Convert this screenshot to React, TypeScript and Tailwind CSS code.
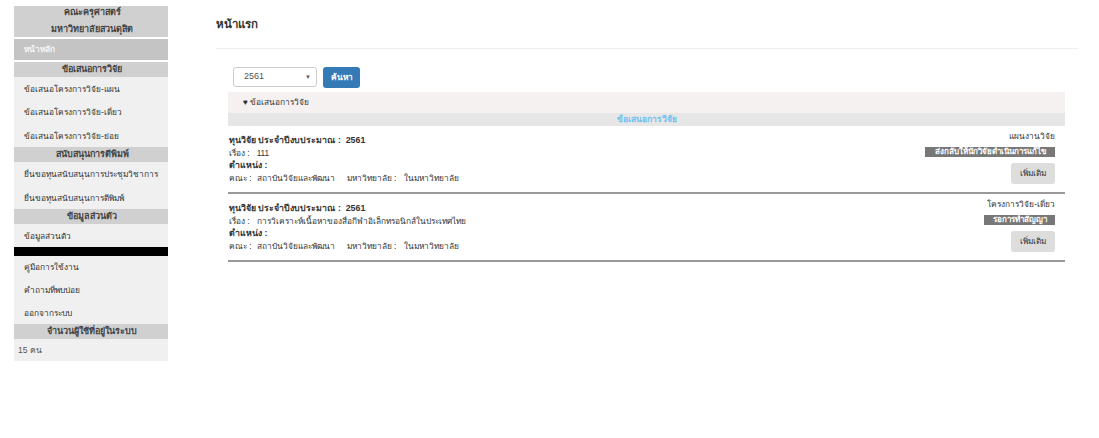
const linkClass = "flex h-[23.4px] items-center whitespace-nowrap pl-[10px] pt-[1px] text-[8.3px] text-[#333]";
const lowerLinkClass = "flex h-[22.7px] items-center whitespace-nowrap pl-[10px] text-[8.3px] text-[#333]";

function SectionHead({ title }: { title: string }) {
	return <div className="flex h-[15px] items-center justify-center pl-[2px] bg-[#d0d0d0] text-[9px] font-bold text-[#444]">{title}</div>;
}

function Project(props: { topic: string; type: string; status: string; statusWidth: string }) {
	return (
		<div className="flex h-[68px] justify-between border-b-2 border-[#999] text-[8.3px] text-[#333]">
			<div className="flex flex-col pl-px pt-[8px] leading-[12.5px]">
				<p className="text-[8.8px] font-bold">ทุนวิจัย ประจำปีงบประมาณ :&nbsp;&nbsp;2561</p>
				<p>
					เรื่อง :<span className="ml-[7px]">{props.topic}</span>
				</p>
				<p className="text-[8.8px] font-bold">ตำแหน่ง :</p>
				<p>
					คณะ :<span className="ml-[5px]">สถาบันวิจัยและพัฒนา</span>
					<span className="ml-[12px]">มหาวิทยาลัย :</span>
					<span className="ml-[8px]">ในมหาวิทยาลัย</span>
				</p>
			</div>
			<div className="flex flex-col items-end pr-[10px] pt-[5px]">
				<p className="leading-[11px]">{props.type}</p>
				<p className={`mt-[5px] h-[10px] bg-[#777] text-center text-[8px] font-bold leading-[10px] text-white ${props.statusWidth}`}>{props.status}</p>
				<button type="button" className="mt-[6px] h-[21px] w-[44px] rounded-[3px] bg-[#ddd] text-[8.3px] text-[#333]">
					เพิ่มเติม
				</button>
			</div>
		</div>
	);
}

export default function App() {
	return (
		<div className="flex h-[438px] w-[1099px] items-start bg-white font-['Liberation_Sans','Noto_Sans',sans-serif]">
			{/* เมนูด้านซ้าย */}
			<aside className="ml-[14px] mt-[6px] w-[154px] bg-[#f0f0f0]">
				<div className="flex h-[31px] flex-col items-center justify-center bg-[#d0d0d0] pb-[2px] pl-[2px] text-[9px] font-bold leading-[17px] text-[#444]">
					<p>คณะครุศาสตร์</p>
					<p>มหาวิทยาลัยสวนดุสิต</p>
				</div>
				<div className="border-y-2 border-white">
					<div className="flex h-[21px] items-center bg-[#c4c4c4] pl-[10px] text-[8.3px] font-bold text-[#f4f4f4]">หน้าหลัก</div>
				</div>
				<SectionHead title="ข้อเสนอการวิจัย" />
				<a className={linkClass}>ข้อเสนอโครงการวิจัย-แผน</a>
				<a className={linkClass}>ข้อเสนอโครงการวิจัย-เดี่ยว</a>
				<a className={linkClass}>ข้อเสนอโครงการวิจัย-ย่อย</a>
				<SectionHead title="สนับสนุนการตีพิมพ์" />
				<a className={linkClass}>ยื่นขอทุนสนับสนุนการประชุมวิชาการ</a>
				<a className={linkClass}>ยื่นขอทุนสนับสนุนการตีพิมพ์</a>
				<SectionHead title="ข้อมูลส่วนตัว" />
				<a className={linkClass}>ข้อมูลส่วนตัว</a>
				<div className="h-[9px] bg-black" />
				<a className={lowerLinkClass}>คู่มือการใช้งาน</a>
				<a className={lowerLinkClass}>คำถามที่พบบ่อย</a>
				<a className={lowerLinkClass}>ออกจากระบบ</a>
				<SectionHead title="จำนวนผู้ใช้ที่อยู่ในระบบ" />
				<div className="flex h-[22px] items-center pl-[4px] text-[8.5px] text-[#555]">15 คน</div>
			</aside>

			{/* เนื้อหา */}
			<main className="ml-[48px] w-[862px]">
				<h1 className="flex h-[48px] items-center pt-[2px] text-[11.5px] font-bold text-[#333]">หน้าแรก</h1>
				<div className="h-px bg-[#eee]" />
				<div className="ml-[12px] w-[837px]">
					<div className="mt-[18px] flex items-start gap-[6px] pl-[5px]">
						<div className="flex h-[20px] w-[84px] items-center justify-between rounded-[3px] border border-[#ccc] px-[10px] text-[9px] text-[#555]">
							<span>2561</span>
							<span className="-mr-[5px] text-[6px]">▼</span>
						</div>
						<button type="button" className="h-[21px] w-[37px] rounded-[3px] bg-[#337ab7] text-[8.3px] font-bold text-white">
							ค้นหา
						</button>
					</div>
					<div className="mt-[4px] flex h-[21px] items-center bg-[#f5f1f1] pl-[15px] text-[8.3px] text-[#333]">♥ ข้อเสนอการวิจัย</div>
					<div className="flex h-[13px] items-center justify-center bg-[#e6e6e6] text-[8.5px] font-bold text-[#6ec1f0]">ข้อเสนอการวิจัย</div>
					<Project topic="111" type="แผนงานวิจัย" status="ส่งกลับให้นักวิจัยดำเนินการแก้ไข" statusWidth="w-[130px]" />
					<Project
						topic="การวิเคราะห์เนื้อหาของสื่อกีฬาอิเล็กทรอนิกส์ในประเทศไทย"
						type="โครงการวิจัย-เดี่ยว"
						status="รอการทำสัญญา"
						statusWidth="w-[71px]"
					/>
				</div>
			</main>
		</div>
	);
}
